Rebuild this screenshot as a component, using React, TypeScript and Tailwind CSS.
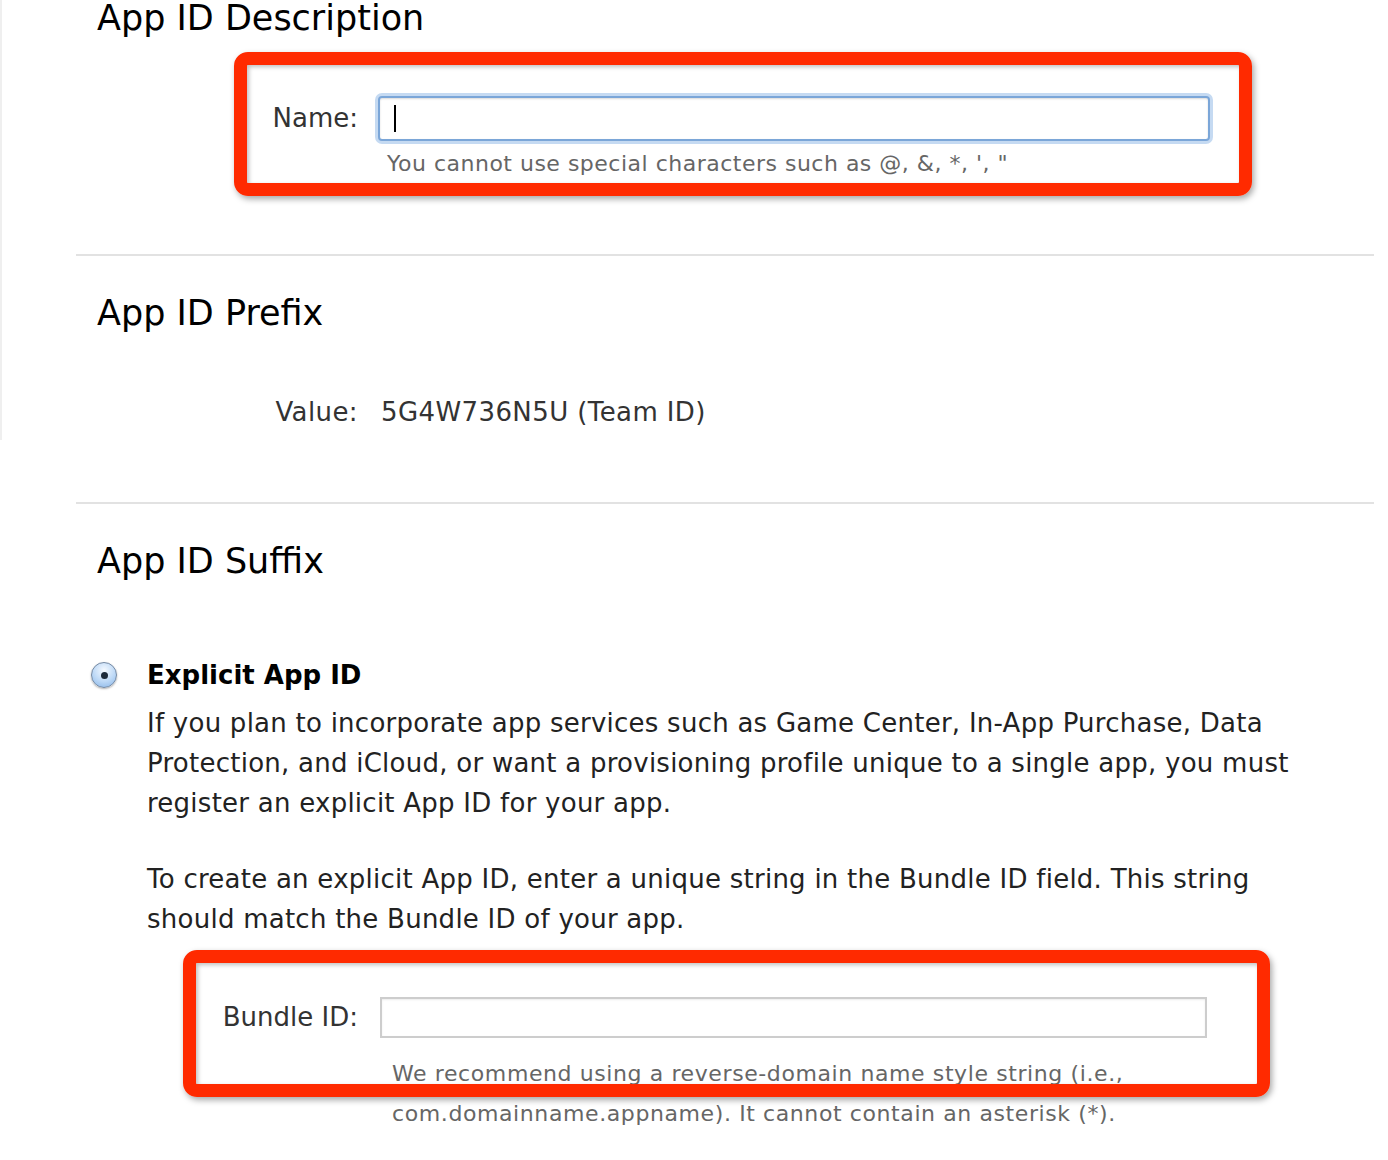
import React from "react";

function RedBox({ className }: { className: string }) {
  return (
    <div
      className={`pointer-events-none absolute rounded-[14px] border-[13px] border-[#ff2a00] shadow-[2px_3px_6px_rgba(0,0,0,0.35),inset_2px_2px_4px_rgba(0,0,0,0.25)] ${className}`}
    />
  );
}

function Radio() {
  return (
    <div className="flex h-[26px] w-[26px] items-center justify-center rounded-full border border-[#7489a3] bg-[radial-gradient(circle_at_50%_30%,#f4f9ff_0%,#bcd8f6_55%,#86b3e6_100%)] shadow-[0_1px_2px_rgba(0,0,0,0.3)]">
      <div className="h-[7px] w-[7px] rounded-full bg-[#1c2a3a]" />
    </div>
  );
}

export default function App() {
  return (
    <div
      className="relative h-[1160px] w-[1388px] overflow-hidden bg-white text-[#222]"
      style={{ fontFamily: '"DejaVu Sans", "Liberation Sans", sans-serif' }}
    >
      <div className="absolute left-0 top-0 h-[440px] w-[2px] bg-[#efefef]" />

      <div className="pl-[76px] pr-[14px]">
        {/* Section 1 */}
        <section className="h-[256px] border-b-2 border-[#e2e2e2]">
          <h2 className="relative -top-[2px] pl-[21px] text-[35px] leading-[40px] text-black">App ID Description</h2>
          <div className="mt-[56px] grid grid-cols-[282px_832px] gap-x-[20px]">
            <div className="flex h-[45px] items-center justify-end text-[26px] text-[#333]">Name:</div>
            <div className="relative h-[45px] rounded-[4px] border-2 border-[#7ba6d8] bg-white shadow-[0_0_0_3px_#c5daf2,inset_0_1px_2px_rgba(0,0,0,0.15)]">
              <div className="absolute left-[14px] top-[7px] h-[27px] w-[2px] bg-black" />
            </div>
            <div />
            <div className="mt-[8px] pl-[9px] text-[22px] leading-[30px] tracking-[0.5px] text-[#666]">
              You cannot use special characters such as @, &amp;, *, ', "
            </div>
          </div>
        </section>

        {/* Section 2 */}
        <section className="h-[248px] border-b-2 border-[#e2e2e2] pt-[37px]">
          <h2 className="pl-[21px] text-[35px] leading-[40px] text-black">App ID Prefix</h2>
          <div className="mt-[59px] flex items-center text-[26px] leading-[40px] tracking-[0.4px] text-[#333]">
            <div className="w-[282px] text-right">Value:</div>
            <div className="pl-[23px]">5G4W736N5U (Team ID)</div>
          </div>
        </section>

        {/* Section 3 */}
        <section className="pt-[37px]">
          <h2 className="pl-[21px] text-[35px] leading-[40px] text-black">App ID Suffix</h2>
          <div className="mt-[74px] flex items-center pl-[15px]">
            <Radio />
            <div className="pl-[30px] text-[26px] font-bold leading-[40px] text-black">Explicit App ID</div>
          </div>
          <div className="pl-[71px] pr-[50px] text-[26px] leading-[40px] tracking-[0.25px] text-[#222]">
            <p className="mt-[8px]">
              If you plan to incorporate app services such as Game Center, In-App Purchase, Data Protection, and iCloud, or want a provisioning profile unique to a single app, you must register an explicit App ID for your app.
            </p>
            <p className="mt-[36px]">
              To create an explicit App ID, enter a unique string in the Bundle ID field. This string should match the Bundle ID of your app.
            </p>
          </div>
          <div className="mt-[58px] grid grid-cols-[282px_827px] gap-x-[22px]">
            <div className="flex h-[41px] items-center justify-end text-[26px] text-[#333]">Bundle ID:</div>
            <div className="h-[41px] border-2 border-[#cdcdcd] bg-white shadow-[inset_0_1px_2px_rgba(0,0,0,0.08)]" />
            <div />
            <div className="mt-[16px] pl-[12px] text-[22px] leading-[40px] tracking-[0.6px] text-[#666]">
              We recommend using a reverse-domain name style string (i.e., com.domainname.appname). It cannot contain an asterisk (*).
            </div>
          </div>
        </section>
      </div>

      <RedBox className="left-[234px] top-[52px] h-[144px] w-[1018px]" />
      <RedBox className="left-[183px] top-[950px] h-[147px] w-[1087px]" />
    </div>
  );
}
